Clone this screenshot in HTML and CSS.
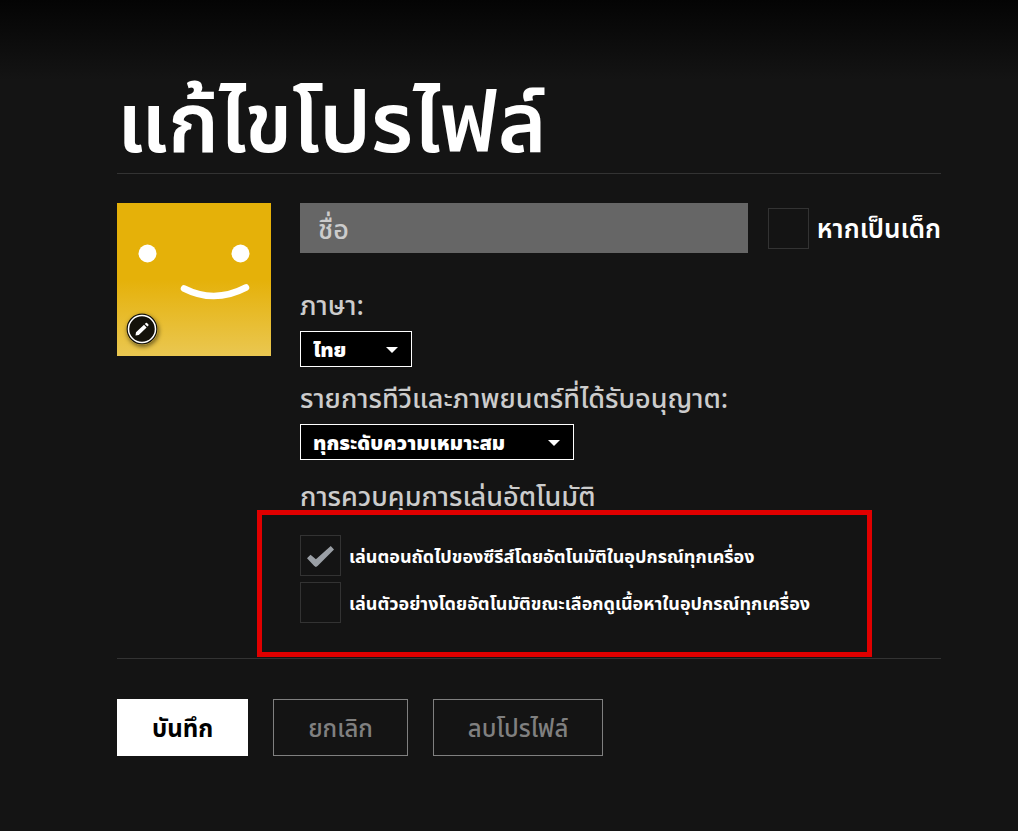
FILE: index.html
```html
<!DOCTYPE html>
<html lang="th">
  <head>
    <meta charset="utf-8">
    <title>แก้ไขโปรไฟล์</title>
    <link rel="stylesheet" href="styles.css">
  </head>

  <body>
    <main class="profile">
      <h1>แก้ไขโปรไฟล์</h1>

      <form>
        <div class="profile-main">
          <div class="avatar">
            <svg class="face" viewBox="0 0 154 153" aria-hidden="true">
              <circle cx="30.5" cy="50.5" r="9" fill="#fff"/>
              <circle cx="123.5" cy="50.5" r="9" fill="#fff"/>
              <path d="M67 85.500Q97.500 101 129 84.500" fill="none" stroke="#fff" stroke-width="6.500" stroke-linecap="round"/>
            </svg>
            <button class="avatar-edit" type="button" aria-label="แก้ไข">
              <svg viewBox="0 0 32 32" aria-hidden="true">
                <circle cx="16" cy="16" r="15.500" fill="#14120a"/>
                <circle cx="16" cy="16" r="13.500" fill="none" stroke="#fff" stroke-width="1.500"/>
                <path d="M9.500 22.500l.500-3.200 8-7.600 2.600 2.700-7.800 7.600zM18.800 11l1-1q.600-.600 1.200 0l1.400 1.400q.600.600 0 1.200l-1 1z" fill="#fff"/>
              </svg>
            </button>
          </div>

          <div class="fields">
            <div class="name-row">
              <input class="name-input" type="text" placeholder="ชื่อ" aria-label="ชื่อ">
              <label class="check kids">
                <input type="checkbox">
                <span>หากเป็นเด็ก</span>
              </label>
            </div>

            <div class="field">
              <label class="field-label" for="language">ภาษา:</label>
              <div class="dropdown language">
                <select id="language">
                  <option>ไทย</option>
                </select>
              </div>
            </div>

            <div class="field">
              <label class="field-label" for="maturity">รายการทีวีและภาพยนตร์ที่ได้รับอนุญาต:</label>
              <div class="dropdown maturity">
                <select id="maturity">
                  <option>ทุกระดับความเหมาะสม</option>
                </select>
              </div>
            </div>

            <h2 class="field-label">การควบคุมการเล่นอัตโนมัติ</h2>
            <div class="autoplay">
              <label class="check">
                <input type="checkbox" checked>
                <span>เล่นตอนถัดไปของซีรีส์โดยอัตโนมัติในอุปกรณ์ทุกเครื่อง</span>
              </label>
              <label class="check">
                <input type="checkbox">
                <span>เล่นตัวอย่างโดยอัตโนมัติขณะเลือกดูเนื้อหาในอุปกรณ์ทุกเครื่อง</span>
              </label>
            </div>
          </div>
        </div>

        <div class="buttons">
          <button class="btn btn-save" type="submit">บันทึก</button>
          <button class="btn" type="button">ยกเลิก</button>
          <button class="btn" type="button">ลบโปรไฟล์</button>
        </div>
      </form>
    </main>
  </body>
</html>
```

FILE: styles.css
```css
* { box-sizing: border-box; }
body {
  margin: 0;
  min-height: 100vh;
  background: #141414 linear-gradient(#040404, #141414) no-repeat 0 0 / 100% 80px;
  color: #fff;
  font-family: "Noto Sans Thai", "Noto Sans", "Liberation Sans", sans-serif;
}
input, select, button { font-family: inherit; }
.profile {
  margin: 0 77px 0 117px;
  padding-top: 81px;
}
h1 {
  margin: 0;
  font-size: 83px;
  line-height: 92px;
  font-weight: 600;
  white-space: nowrap;
}

/* avatar and fields */
.profile-main {
  display: flex;
  gap: 29px;
  padding-top: 29px;
  border: solid #333;
  border-width: 1px 0;
}
.avatar {
  position: relative;
  flex: none;
  width: 154px;
  height: 153px;
  background: linear-gradient(#e5b109 50%, #eac751);
}
.face { display: block; }
.avatar-edit {
  position: absolute;
  left: 9px;
  bottom: 11px;
  width: 32px;
  height: 32px;
  padding: 0;
  border: 0;
  border-radius: 50%;
  background: none;
  box-shadow: 1px 2px 4px rgba(0, 0, 0, 0.5);
}
.avatar-edit svg { display: block; }
.fields {
  flex: 1;
  min-width: 0;
}
.name-row {
  display: flex;
  align-items: flex-start;
  gap: 20px;
  margin-bottom: 36px;
}
.name-input {
  flex: 1;
  min-width: 0;
  height: 50px;
  padding: 4px 18px 0;
  border: 0;
  background: #666;
  color: #fff;
  font-size: 27px;
  font-weight: 500;
}
.name-input::placeholder { color: #ccc; }
.field { margin-bottom: 15px; }
.field-label {
  display: block;
  margin: 0;
  color: #ccc;
  font-size: 27px;
  line-height: 36px;
  font-weight: 500;
  white-space: nowrap;
}
h2.field-label { margin-top: 20px; }

.dropdown {
  position: relative;
  margin-top: 6px;
}
.dropdown::after {
  content: "";
  position: absolute;
  top: 16px;
  right: 14px;
  border: 6px solid transparent;
  border-top-color: #fff;
  border-bottom: 0;
  pointer-events: none;
}
.language { width: 112px; }
.maturity { width: 274px; }
select {
  appearance: none;
  display: block;
  width: 100%;
  height: 36px;
  padding: 4px 12px 0;
  border: 1px solid #fff;
  border-radius: 0;
  background: #000;
  color: #fff;
  font-size: 20px;
  font-weight: 900;
}

/* checkboxes */
.check {
  display: flex;
  align-items: center;
  gap: 8px;
  font-size: 18px;
  font-weight: 700;
  white-space: nowrap;
}
.check input {
  appearance: none;
  display: grid;
  place-items: center;
  flex: none;
  width: 41px;
  height: 41px;
  margin: 0;
  border: 1px solid #333;
}
.check input:checked::before {
  content: "";
  width: 27px;
  height: 21px;
  margin-top: 2px;
  background: #9a9fa5;
  clip-path: polygon(0 58%, 13% 42%, 33% 63%, 88% 0, 100% 17%, 39% 95%, 33% 100%, 27% 95%);
}
.check span { padding-top: 3px; }
.kids {
  padding-top: 4px;
  font-size: 26px;
  font-weight: 600;
}
.autoplay {
  position: relative;
  display: flex;
  flex-direction: column;
  gap: 6px;
  padding: 19px 0 35px;
}
/* red highlight round the autoplay options */
.autoplay::after {
  content: "";
  position: absolute;
  top: -6px;
  right: 69px;
  bottom: 1px;
  left: -43px;
  border: 5px solid #e00000;
  pointer-events: none;
}

.buttons {
  display: flex;
  gap: 25px;
  padding: 40px 0;
}
.btn {
  height: 57px;
  padding: 4px 34px 0;
  border: 1px solid #808080;
  background: none;
  color: #808080;
  font-size: 24px;
  font-weight: 500;
}
.btn-save {
  border-color: #fff;
  background: #fff;
  color: #000;
  font-weight: 700;
}
```
